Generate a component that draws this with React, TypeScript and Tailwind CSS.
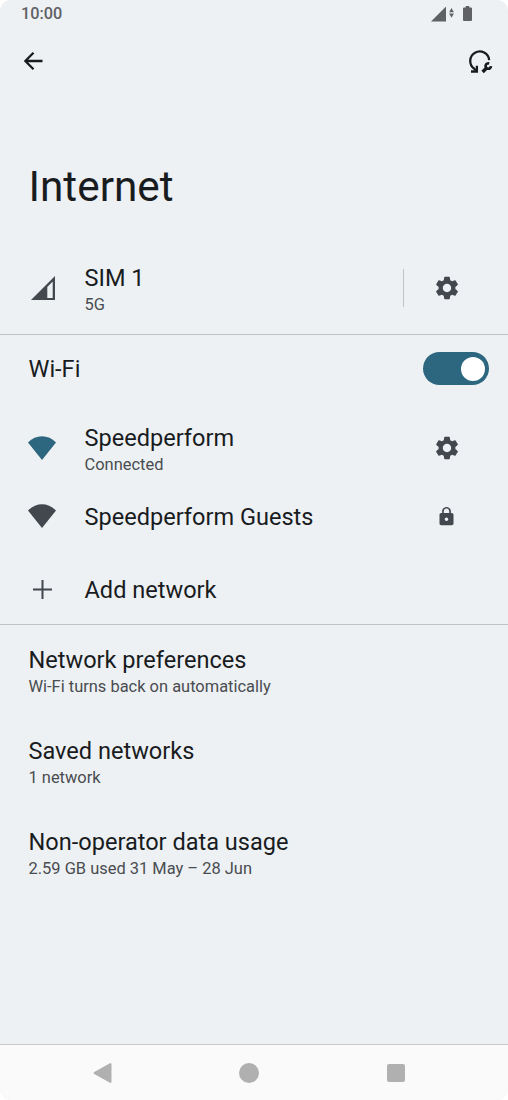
import type { ReactNode } from "react"
import { MdSettings, MdLock } from "react-icons/md"

const WifiIcon = ({ className }: { className: string }) => (
  <svg className={className} width="28" height="24" viewBox="0 0 28 24" fill="currentColor">
    <path d="M14 24L0 6.600C4 2.400 8.800 0.300 14 0.300S24 2.400 28 6.600Z" />
  </svg>
)

const SignalIcon = () => (
  <svg width="24" height="24" viewBox="0 0 24 24" fill="currentColor" fillRule="evenodd">
    <path d="M0 24L24 0V24ZM16.300 11V22H21.700V5.600Z" />
  </svg>
)

const ResetIcon = () => (
  <svg width="26" height="26" viewBox="0 0 26 26" fill="none" stroke="currentColor" strokeWidth="2.300">
    <path d="M9.500 22.600L7.300 20.800A9.500 9.500 0 1 1 22.200 12.200" />
    <path d="M4 23.500H9.900V17.800" />
    <path d="M15.600 24L19.600 20" strokeWidth="3.400" />
    <path d="M22.200 15.500A2.700 2.700 0 1 0 24 18.200" strokeWidth="2.700" />
  </svg>
)

type RowProps = {
  icon?: ReactNode
  title: string
  summary?: string
  action?: ReactNode
  className: string
}

const Row = ({ icon, title, summary, action, className }: RowProps) => {
  return (
    <div className={`flex items-center shrink-0 pl-7 ${className}`}>
      {icon && <div className="w-14 flex items-center text-[#43474e]">{icon}</div>}
      <div className={`flex-1 pl-[0.500px] ${icon && summary ? "pt-1" : "pt-0.5"}`}>
        <h2 className="text-[23.550px] leading-[29px] text-[#191c1e]">{title}</h2>
        {summary && <p className="text-[16.450px] leading-[23px] text-[#494c50]">{summary}</p>}
      </div>
      {action}
    </div>
  )
}

const preferences = [
  { title: "Network preferences", summary: "Wi-Fi turns back on automatically" },
  { title: "Saved networks", summary: "1 network" },
  { title: "Non-operator data usage", summary: "2.59 GB used 31 May – 28 Jun" },
]

const App = () => {
  return (
    <div className="bg-white">
      <main className="w-[508px] h-[1100px] flex flex-col overflow-hidden rounded-[11px] bg-[#edf1f4] font-['Roboto',sans-serif]">
        <div className="h-7 flex items-center shrink-0 pl-[21px] pr-9 text-[#5f6165]">
          <span className="flex-1 text-[16.300px] leading-7 font-medium">10:00</span>
          <svg width="15" height="15" viewBox="0 0 15 15" fill="currentColor">
            <path d="M0 14.500L15 -0.500V14.500Z" />
          </svg>
          <svg className="ml-[3px] mb-[3px]" width="5" height="10" viewBox="0 0 5 10" fill="currentColor">
            <path d="M2.500 0L4.900 4.200H0.100ZM0.100 5.600H4.900L2.500 9.800Z" />
          </svg>
          <svg className="ml-[9px] mb-px" width="9" height="15" viewBox="0 0 9 15" fill="currentColor">
            <path d="M2.700 0H6.300V1.500H8Q9 1.500 9 2.500V14Q9 15 8 15H1Q0 15 0 14V2.500Q0 1.500 1 1.500H2.700Z" />
          </svg>
        </div>

        <header className="h-[66px] flex items-center justify-between shrink-0 pl-6 pr-[15px] text-[#191c1e]">
          <svg width="19" height="18" viewBox="0 0 19 18" fill="none" stroke="currentColor" strokeWidth="2.300">
            <path d="M18.500 9H1.500M9.500 0.800L1.300 9L9.500 17.200" />
          </svg>
          <ResetIcon />
        </header>

        <h1 className="shrink-0 pt-[68px] pl-[28.500px] text-[42.300px] leading-[50px] text-[#191c1e]">Internet</h1>

        <section className="mt-[30px] border-b border-[#bfc2c6] shrink-0">
          <Row
            className="h-[92px] pr-[47px]"
            icon={<span className="ml-[3px]"><SignalIcon /></span>}
            title="SIM 1"
            summary="5G"
            action={
              <div className="flex items-center text-[#43474e]">
                <div className="w-px h-[38px] mr-[29px] bg-[#bfc2c6]" />
                <MdSettings className="size-7" />
              </div>
            }
          />
        </section>

        <section className="border-b border-[#bfc2c6] shrink-0">
          <Row
            className="h-[67px] pr-[19px]"
            title="Wi-Fi"
            action={
              <div className="w-[66px] h-[33px] flex items-center justify-end rounded-full bg-[#2d667f] pr-1">
                <div className="size-6 rounded-full bg-white" />
              </div>
            }
          />
          <Row
            className="h-[92px] pr-[47px]"
            icon={<WifiIcon className="text-[#2d667f]" />}
            title="Speedperform"
            summary="Connected"
            action={<MdSettings className="size-7 text-[#43474e]" />}
          />
          <Row
            className="h-11 pr-[51px]"
            icon={<WifiIcon className="" />}
            title="Speedperform Guests"
            action={<MdLock className="size-[21px] text-[#43474e]" />}
          />
          <Row
            className="h-[86px] pt-4"
            icon={
              <svg className="ml-[5px]" width="19" height="19" viewBox="0 0 19 19" stroke="currentColor" strokeWidth="2">
                <path d="M9.500 0V19M0 9.500H19" />
              </svg>
            }
            title="Add network"
          />
        </section>

        <section className="flex-1">
          {preferences.map((item) => (
            <Row key={item.title} className="h-[91px]" title={item.title} summary={item.summary} />
          ))}
        </section>

        <nav className="h-14 flex items-center shrink-0 border-t border-[#c7cacd] bg-[#fafafa] pl-[93px] text-[#b0b0b0]">
          <svg width="19" height="20" viewBox="0 0 19 20" fill="currentColor">
            <path d="M17 0.300Q18.500 -0.300 18.500 1.500V18.500Q18.500 20.300 17 19.700L1.200 11Q0 10 1.200 9Z" />
          </svg>
          <div className="size-5 ml-[127px] rounded-full bg-[#b0b0b0]" />
          <div className="size-[18px] ml-32 rounded-[2px] bg-[#b0b0b0]" />
        </nav>
      </main>
    </div>
  )
}

export default App
